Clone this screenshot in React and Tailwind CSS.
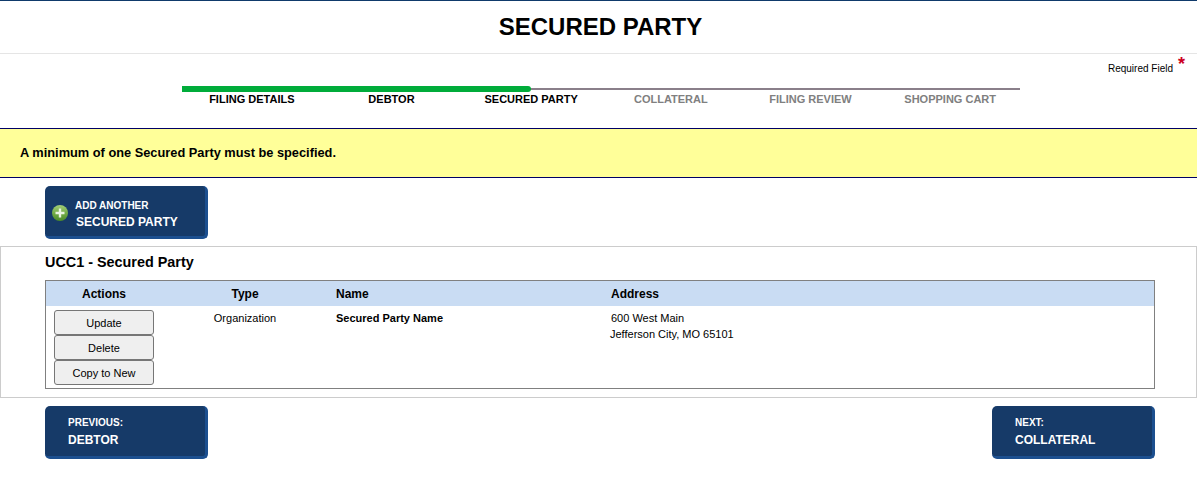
const steps = [
  { label: "FILING DETAILS", done: true },
  { label: "DEBTOR", done: true },
  { label: "SECURED PARTY", done: true },
  { label: "COLLATERAL", done: false },
  { label: "FILING REVIEW", done: false },
  { label: "SHOPPING CART", done: false },
];

const PlusIcon = () => (
  <svg width="16" height="16" viewBox="0 0 16 16" className="shrink-0">
    <defs>
      <linearGradient id="plusFill" x1="0" y1="0" x2="0" y2="1">
        <stop offset="0%" stopColor="#a3cf78" />
        <stop offset="55%" stopColor="#6fa943" />
        <stop offset="100%" stopColor="#4a8a28" />
      </linearGradient>
    </defs>
    <circle cx="8" cy="8" r="8" fill="url(#plusFill)" />
    <path d="M8 3.5v9M3.5 8h9" stroke="#e9f3e0" strokeWidth="2.4" />
  </svg>
);

const NavButton = ({ small, big, className = "" }) => (
  <a href="#" className={`flex h-[53px] w-[163px] flex-col rounded-[5px] border-r-[3px] border-b-[3px] border-[#1c4f8f] bg-[#163a68] pl-[23px] pt-[10px] font-bold text-white ${className}`}>
    <span className="text-[10px] leading-[13px]">{small}</span>
    <span className="mt-[4px] text-[12px] leading-[15px]">{big}</span>
  </a>
);

const ActionButton = ({ children }) => (
  <button type="button" className="flex h-[25px] w-[100px] items-center justify-center rounded-[3px] border border-[#767676] bg-[#efefef] text-[11px] text-black">
    {children}
  </button>
);

export default function App() {
  return (
    <div className="min-h-[480px] bg-white font-['Liberation_Sans',Arial,sans-serif] text-black">
      <header className="flex h-[54px] items-center justify-center border-t border-b border-t-[#0f3a6b] border-b-[#e5e5e5] pl-[4px]">
        <h1 className="text-[24px] font-bold leading-none">SECURED PARTY</h1>
      </header>

      <div className="h-[74px]">
        <div className="flex h-[32px] items-start justify-end pr-[12px]">
          <span className="mt-[9px] text-[10px] leading-[11px]">Required Field</span>
          <span className="ml-[5px] mt-[1px] text-[18px] font-bold leading-[18px] text-[#cc0022]">*</span>
        </div>
        <div className="relative ml-[182px] w-[838px]">
          <div className="h-[6px] pt-[2px]">
            <div className="h-[2px] bg-[#8a7f8a]" />
          </div>
          <div className="absolute left-0 top-0 h-[6px] w-[349px] rounded-r-[3px] bg-[#00ac3a]" />
          <div className="grid grid-cols-6">
            {steps.map((step) => (
              <div key={step.label} className={`mt-[1px] text-center text-[11px] font-bold leading-[13px] ${step.done ? "text-black" : "text-[#808080]"}`}>
                {step.label}
              </div>
            ))}
          </div>
        </div>
      </div>

      <div className="flex h-[50px] items-center border-y border-[#000066] bg-[#ffff99] pl-[20px] text-[12.8px] font-bold">
        A minimum of one Secured Party must be specified.
      </div>

      <div className="pl-[45px] pt-[8px]">
        <a href="#" className="flex h-[53px] w-[163px] items-center rounded-[5px] border-r-[3px] border-b-[3px] border-[#1c4f8f] bg-[#163a68] pl-[7px] pt-[3px] font-bold text-white">
          <PlusIcon />
          <span className="ml-[7px] flex flex-col pt-[3px]">
            <span className="text-[10px] leading-[13px]">ADD ANOTHER</span>
            <span className="mt-[3px] pl-px text-[12px] leading-[15px]">SECURED PARTY</span>
          </span>
        </a>
      </div>

      <section className="mt-[7px] h-[152px] border border-[#cccccc] pl-[44px] pr-[41px]">
        <h2 className="pt-[7px] text-[14.4px] font-bold leading-[16px]">UCC1 - Secured Party</h2>
        <div className="mt-[10px] h-[109px] border border-[#808080]">
          <div className="grid h-[25px] grid-cols-[116px_166px_275px_1fr] items-center bg-[#c9dcf3] text-[12px] font-bold">
            <div className="text-center">Actions</div>
            <div className="text-center">Type</div>
            <div className="pl-[8px]">Name</div>
            <div className="pl-[8px]">Address</div>
          </div>
          <div className="grid grid-cols-[116px_166px_275px_1fr] text-[11px] leading-[16px]">
            <div className="flex flex-col pl-[8px] pt-[4px]">
              <ActionButton>Update</ActionButton>
              <ActionButton>Delete</ActionButton>
              <ActionButton>Copy to New</ActionButton>
            </div>
            <div className="pt-[4px] text-center">Organization</div>
            <div className="pl-[8px] pt-[4px] font-bold">Secured Party Name</div>
            <div className="pl-[7px] pt-[4px]">
              <div className="pl-px">600 West Main</div>
              <div>Jefferson City, MO 65101</div>
            </div>
          </div>
        </div>
      </section>

      <nav className="flex justify-between pl-[45px] pr-[42px] pt-[8px]">
        <NavButton small="PREVIOUS:" big="DEBTOR" />
        <NavButton small="NEXT:" big="COLLATERAL" />
      </nav>
    </div>
  );
}
